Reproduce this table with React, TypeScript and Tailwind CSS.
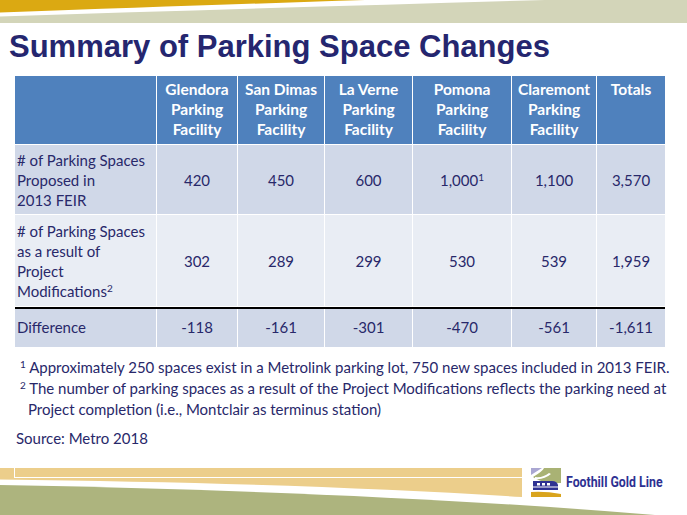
const cols = "grid grid-cols-[141px_80px_86px_87px_98px_84px_68px] gap-x-px";

const headers = [
  ["Glendora", "Parking", "Facility"],
  ["San Dimas", "Parking", "Facility"],
  ["La Verne", "Parking", "Facility"],
  ["Pomona", "Parking", "Facility"],
  ["Claremont", "Parking", "Facility"],
  ["Totals"],
];

const proposed = ["420", "450", "600", "1,000", "1,100", "3,570"];
const modified = ["302", "289", "299", "530", "539", "1,959"];
const difference = ["-118", "-161", "-301", "-470", "-561", "-1,611"];

const supCls = "relative -top-[5px] align-baseline text-[10px]";

function TopBand() {
  return (
    <svg width="687" height="24" viewBox="0 0 687 24" preserveAspectRatio="none" className="block">
      <rect x="0" y="0" width="687" height="23" fill="#d3d5b9" />
      <path d="M0 0 H545 Q300 7 0 16.5 Z" fill="#ffffff" />
      <path d="M0 0 H365 Q210 5 0 12.5 Z" fill="#dba912" />
    </svg>
  );
}

function Logo() {
  return (
    <svg width="30" height="29" viewBox="0 0 30 29">
      <rect width="30" height="29" fill="#ffffff" />
      <path d="M0 0 H11 L0 7 Z" fill="#aaa7d2" />
      <path d="M13 0 H30 V15 H16 Q6 12 2 9 Q12 3 13 0 Z" fill="#a9b274" />
      <path d="M4 9 Q12 10 18 5 L20 6 Q13 12 4 11 Z" fill="#ffffff" />
      <path d="M2 13 H21 Q26 13 27 17 V22 H2 Z" fill="#2e3192" />
      <rect x="6" y="15" width="3" height="2.5" fill="#ffffff" />
      <rect x="11" y="15" width="3" height="2.5" fill="#ffffff" />
      <rect x="16" y="15" width="3" height="2.5" fill="#ffffff" />
      <rect x="2" y="18.5" width="25" height="1" fill="#ffffff" />
      <path d="M0 24 Q14 23 30 26 V29 H0 Z" fill="#d9a41c" />
    </svg>
  );
}

function BottomBand() {
  return (
    <div className="relative mt-auto h-[47px]">
      <svg width="687" height="47" viewBox="0 0 687 47" className="absolute inset-0">
        <path d="M0 17 Q380 24 655 47 H0 Z" fill="#adb47e" />
        <path d="M0 0 H522 V29 Q300 15 0 11.5 Z" fill="#ecce8b" />
        <rect x="14" y="9" width="508" height="1" fill="#ffffff" />
        <rect x="14" y="0" width="1" height="9" fill="#ffffff" />
      </svg>
      <div className="relative flex items-center gap-[5px] pl-[531px]">
        <Logo />
        <span className="origin-left scale-x-[0.88] whitespace-nowrap font-['Roboto',sans-serif] text-[14px] font-bold leading-[29px] text-[#2e3192]">
          Foothill Gold Line
        </span>
      </div>
    </div>
  );
}

function Cell({ children, dark }: { children: React.ReactNode; dark?: boolean }) {
  return (
    <div className={`${dark ? "bg-[#d0d8e8]" : "bg-[#e9edf4]"} flex items-center justify-center`}>
      {children}
    </div>
  );
}

export default function App() {
  return (
    <div className="flex h-[515px] w-[687px] flex-col overflow-hidden bg-white font-['Lato',sans-serif] text-[#28286a]">
      <TopBand />

      <h1 className="h-[52px] pl-[9px] pt-[4px] font-['Liberation_Sans',Arial,sans-serif] text-[31px] font-bold leading-[38px] text-[#25266f]">
        Summary of Parking Space Changes
      </h1>

      <div className="ml-[15px] flex w-[650px] flex-col gap-y-px bg-white text-[15px] leading-5">
        <div className={`${cols} h-[68px]`}>
          <div className="bg-[#4f81bd]" />
          {headers.map((h) => (
            <div key={h[0]} className="bg-[#4f81bd] pt-[3px] text-center text-[15.5px] font-bold text-white">
              {h.map((line) => (
                <div key={line}>{line}</div>
              ))}
            </div>
          ))}
        </div>

        <div className={`${cols} h-[69px]`}>
          <div className="flex items-center bg-[#d0d8e8] pl-[2px]">
            <div>
              # of Parking Spaces
              <br />
              Proposed in
              <br />
              2013 FEIR
            </div>
          </div>
          {proposed.map((v) => (
            <Cell key={v} dark>
              {v === "1,000" ? (
                <span>
                  1,000<sup className={supCls}>1</sup>
                </span>
              ) : (
                v
              )}
            </Cell>
          ))}
        </div>

        <div className={`${cols} h-[91px]`}>
          <div className="flex items-center bg-[#e9edf4] pl-[2px]">
            <div>
              # of Parking Spaces
              <br />
              as a result of
              <br />
              Project
              <br />
              Modifications<sup className={supCls}>2</sup>
            </div>
          </div>
          {modified.map((v) => (
            <Cell key={v}>{v}</Cell>
          ))}
        </div>

        <div className={`${cols} h-[27px] border-t-2 border-black`}>
          <div className="bg-[#d0d8e8] pl-[2px] pt-[8px]">Difference</div>
          {difference.map((v) => (
            <div key={v} className="bg-[#d0d8e8] pt-[8px] text-center">
              {v}
            </div>
          ))}
        </div>

        <div className={`${cols} h-[12px]`}>
          {[0, 1, 2, 3, 4, 5, 6].map((i) => (
            <div key={i} className="bg-[#d0d8e8]" />
          ))}
        </div>
      </div>

      <div className="mt-[10px] pl-[28px] pr-[4px] text-[15px] leading-[21px]">
        <p className="-indent-[8px]">
          <sup className={supCls}>1</sup> Approximately 250 spaces exist in a Metrolink parking lot, 750 new spaces included in 2013 FEIR.
        </p>
        <p className="-indent-[8px]">
          <sup className={supCls}>2</sup> The number of parking spaces as a result of the Project Modifications reflects the parking need at Project completion (i.e., Montclair as terminus station)
        </p>
      </div>

      <p className="mt-[8px] pl-[16px] text-[15px] leading-[21px]">Source: Metro 2018</p>

      <BottomBand />
    </div>
  );
}
